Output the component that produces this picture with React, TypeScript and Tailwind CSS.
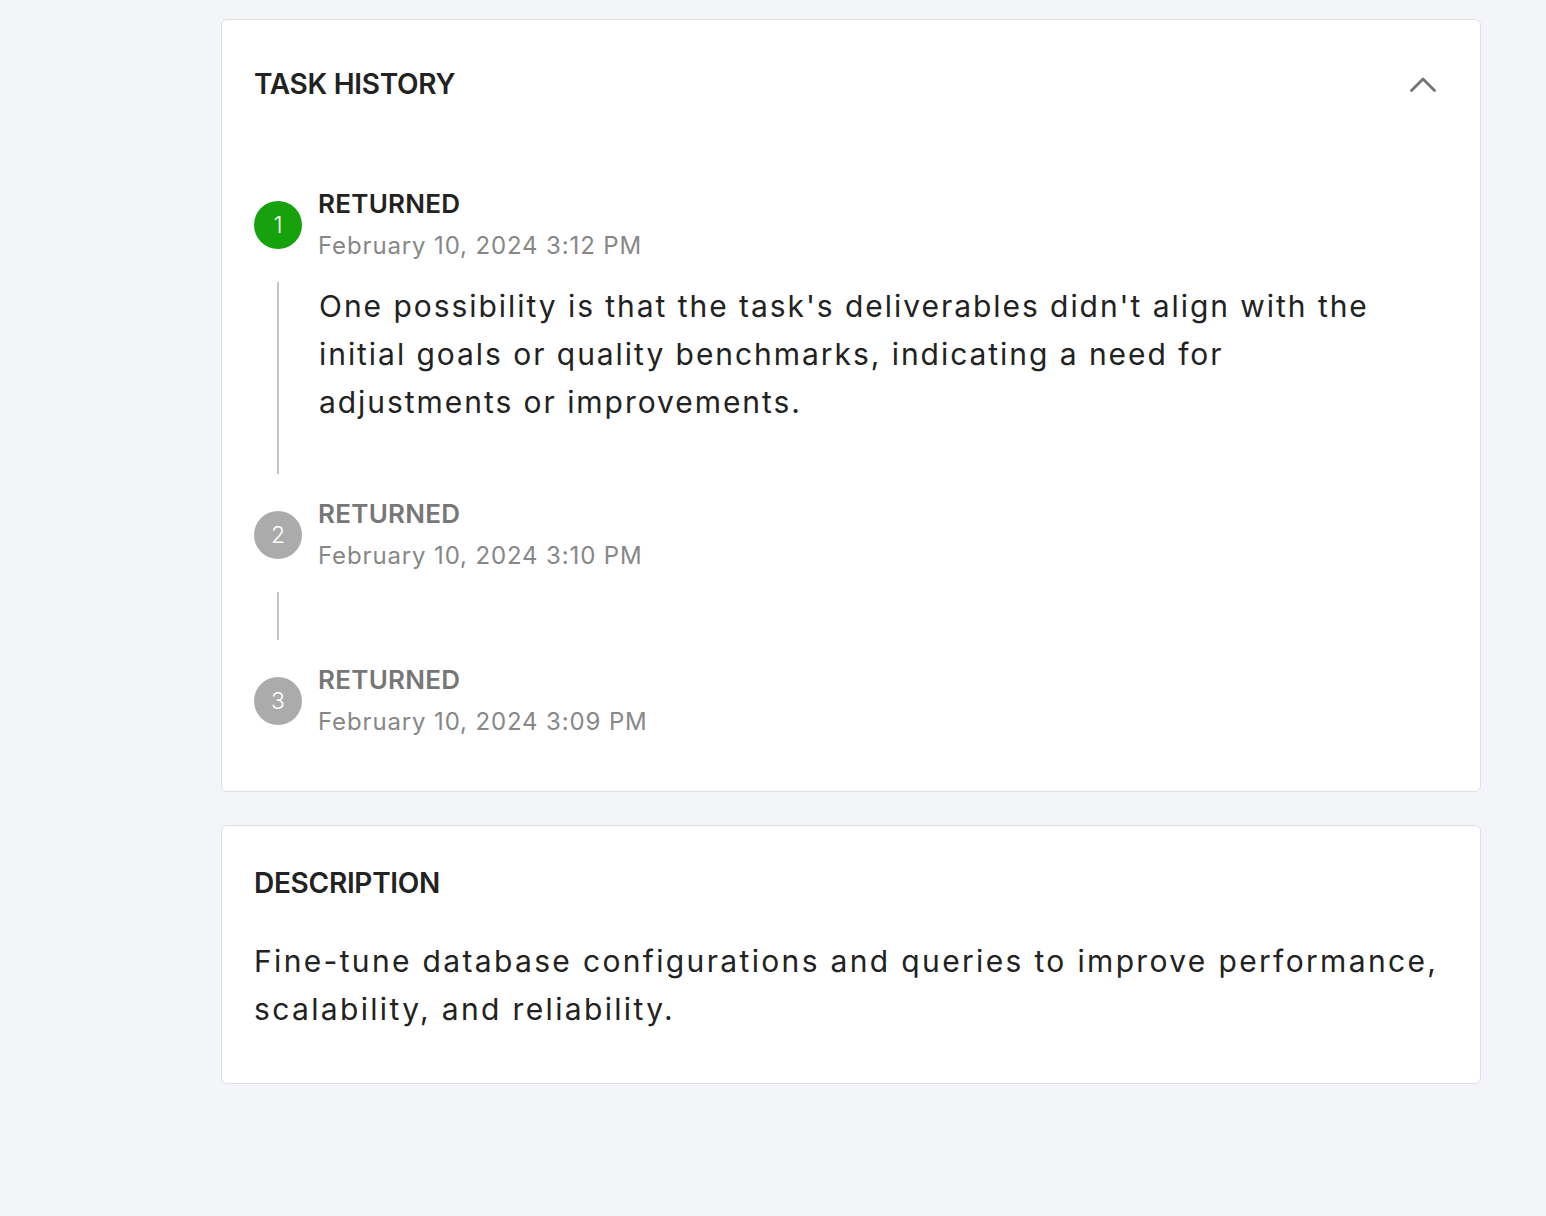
import React from 'react';

type HistoryItem = {
  status: string;
  date: string;
  note?: string;
};

const history: HistoryItem[] = [
  {
    status: 'RETURNED',
    date: 'February 10, 2024 3:12 PM',
    note: "One possibility is that the task's deliverables didn't align with the initial goals or quality benchmarks, indicating a need for adjustments or improvements.",
  },
  { status: 'RETURNED', date: 'February 10, 2024 3:10 PM' },
  { status: 'RETURNED', date: 'February 10, 2024 3:09 PM' },
];

const ChevronUp: React.FC = () => (
  <svg width="26" height="15" viewBox="0 0 26 15" fill="none" className="mr-3">
    <polyline
      points="1.5,13.5 13,2 24.5,13.5"
      stroke="#737373"
      strokeWidth="2.8"
      strokeLinecap="round"
      strokeLinejoin="round"
    />
  </svg>
);

const TimelineItem: React.FC<{ item: HistoryItem; index: number; last: boolean }> = ({
  item,
  index,
  last,
}) => {
  const active = index === 0;
  return (
    <div className="flex flex-col">
      <div className="flex items-center gap-4">
        <div
          className={`flex h-12 w-12 shrink-0 items-center justify-center rounded-full text-[23px] font-light leading-none text-white ${
            active ? 'bg-[#17a20d]' : 'bg-[#ababab]'
          }`}
        >
          {index + 1}
        </div>
        <div className="flex flex-col gap-[6px]">
          <span
            className={`text-[26px] font-semibold leading-[36px] tracking-[0.01em] ${
              active ? 'text-[#222222]' : 'text-[#777777]'
            }`}
          >
            {item.status}
          </span>
          <span className="text-[24px] leading-[36px] tracking-[0.036em] text-[#878787]">
            {item.date}
          </span>
        </div>
      </div>
      {!last && (
        <div className="mb-[22px] ml-[23px] mt-[18px] border-l-2 border-[#c4c4c4] pl-10">
          {item.note ? (
            <p className="pb-12 pr-10 text-[30px] leading-[48px] tracking-[0.065em] text-[#222222]">
              {item.note}
            </p>
          ) : (
            <div className="h-[48px]" />
          )}
        </div>
      )}
    </div>
  );
};

export default function App() {
  return (
    <div
      className="min-h-screen bg-[#f4f5f9] pl-[221px] pr-[65px] pt-[19px] pb-16"
      style={{ fontFamily: 'Inter, "Open Sans", sans-serif' }}
    >
      <div className="flex flex-col gap-[33px]">
        <section className="rounded-md border border-[#e0e0e0] bg-white px-8 pb-[51px] pt-[46px]">
          <div className="flex items-center justify-between">
            <h2 className="text-[28px] font-semibold leading-[36px] tracking-[-0.01em] text-[#222222]">
              TASK HISTORY
            </h2>
            <ChevronUp />
          </div>
          <div className="mt-[84px] flex flex-col">
            {history.map((item, i) => (
              <TimelineItem key={i} item={item} index={i} last={i === history.length - 1} />
            ))}
          </div>
        </section>

        <section className="rounded-md border border-[#e0e0e0] bg-white px-8 pb-[50px] pt-[39px]">
          <h2 className="text-[28px] font-semibold leading-[36px] tracking-[-0.01em] text-[#222222]">
            DESCRIPTION
          </h2>
          <p className="mt-[36px] text-[30px] leading-[48px] tracking-[0.078em] text-[#222222]">
            Fine-tune database configurations and queries to improve performance, scalability, and
            reliability.
          </p>
        </section>
      </div>
    </div>
  );
}
